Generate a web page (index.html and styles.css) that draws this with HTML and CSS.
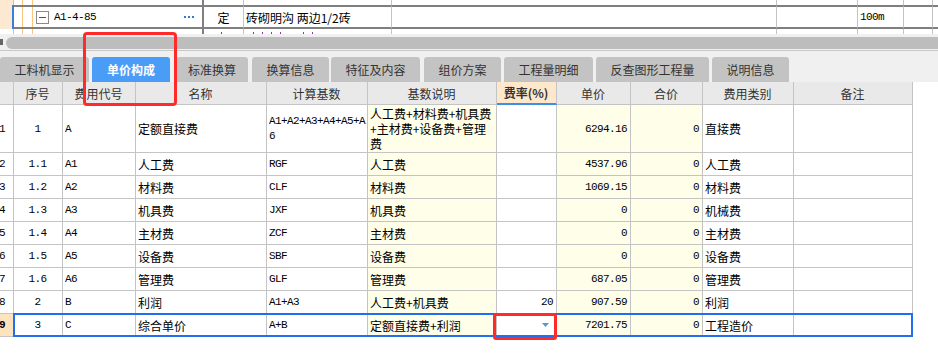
FILE: index.html
```html
<!DOCTYPE html>
<html lang="zh-CN">
<head>
    <meta charset="UTF-8">
    <title>单价构成</title>
    <link rel="stylesheet" href="styles.css">
</head>
<body>
<div class="page">

    <!-- Upper grid: the selected item row, partly scrolled -->
    <div class="top-grid">
        <div class="trow trow-prev">
            <div class="c-ind"></div><div class="c-code"></div><div></div><div></div><div></div><div></div><div></div><div></div><div class="c-last"></div>
        </div>
        <div class="trow trow-main">
            <div class="c-ind"></div>
            <div class="c-code">
                <span class="fold"></span>
                <span class="mono code-text">A1-4-85</span>
                <span class="more"><i></i><i></i><i></i></span>
            </div>
            <div class="c-type">定</div>
            <div class="c-name">砖砌明沟 两边1/2砖</div>
            <div></div>
            <div></div>
            <div class="c-unit mono">100m</div>
            <div></div>
            <div class="c-last"></div>
        </div>
        <div class="trow trow-next">
            <div class="c-ind"></div>
            <div class="c-code"></div>
            <div class="dots dots-type"><i></i></div>
            <div class="dots dots-name"><i></i><i></i><i></i><i></i><i class="far"></i><i></i></div>
            <div></div><div></div><div></div><div></div><div class="c-last"></div>
        </div>
    </div>

    <!-- Horizontal scrollbar -->
    <div class="hscroll">
        <span class="hscroll-arrow"></span>
        <span class="hscroll-thumb"></span>
    </div>

    <!-- Tabs -->
    <div class="tabbar">
        <div class="tab">工料机显示</div>
        <div class="tab active">单价构成</div>
        <div class="tab">标准换算</div>
        <div class="tab">换算信息</div>
        <div class="tab">特征及内容</div>
        <div class="tab">组价方案</div>
        <div class="tab">工程量明细</div>
        <div class="tab">反查图形工程量</div>
        <div class="tab">说明信息</div>
    </div>

    <!-- Unit price breakdown grid -->
    <div class="grid">
        <div class="grow ghead">
            <div></div>
            <div>序号</div>
            <div>费用代号</div>
            <div>名称</div>
            <div>计算基数</div>
            <div>基数说明</div>
            <div class="h-rate">费率(%)</div>
            <div>单价</div>
            <div>合价</div>
            <div>费用类别</div>
            <div>备注</div>
        </div>

        <div class="grow tall">
            <div class="rn mono">1</div>
            <div class="mono center">1</div>
            <div class="mono">A</div>
            <div>定额直接费</div>
            <div class="mono wrap">A1+A2+A3+A4+A5+A6</div>
            <div class="yellow wrap">人工费+材料费+机具费+主材费+设备费+管理费</div>
            <div class="mono right"></div>
            <div class="yellow mono right">6294.16</div>
            <div class="yellow mono right">0</div>
            <div>直接费</div>
            <div></div>
        </div>

        <div class="grow">
            <div class="rn mono">2</div>
            <div class="mono center">1.1</div>
            <div class="mono">A1</div>
            <div>人工费</div>
            <div class="mono">RGF</div>
            <div class="yellow">人工费</div>
            <div class="mono right"></div>
            <div class="yellow mono right">4537.96</div>
            <div class="yellow mono right">0</div>
            <div>人工费</div>
            <div></div>
        </div>

        <div class="grow">
            <div class="rn mono">3</div>
            <div class="mono center">1.2</div>
            <div class="mono">A2</div>
            <div>材料费</div>
            <div class="mono">CLF</div>
            <div class="yellow">材料费</div>
            <div class="mono right"></div>
            <div class="yellow mono right">1069.15</div>
            <div class="yellow mono right">0</div>
            <div>材料费</div>
            <div></div>
        </div>

        <div class="grow">
            <div class="rn mono">4</div>
            <div class="mono center">1.3</div>
            <div class="mono">A3</div>
            <div>机具费</div>
            <div class="mono">JXF</div>
            <div class="yellow">机具费</div>
            <div class="mono right"></div>
            <div class="yellow mono right">0</div>
            <div class="yellow mono right">0</div>
            <div>机械费</div>
            <div></div>
        </div>

        <div class="grow">
            <div class="rn mono">5</div>
            <div class="mono center">1.4</div>
            <div class="mono">A4</div>
            <div>主材费</div>
            <div class="mono">ZCF</div>
            <div class="yellow">主材费</div>
            <div class="mono right"></div>
            <div class="yellow mono right">0</div>
            <div class="yellow mono right">0</div>
            <div>主材费</div>
            <div></div>
        </div>

        <div class="grow">
            <div class="rn mono">6</div>
            <div class="mono center">1.5</div>
            <div class="mono">A5</div>
            <div>设备费</div>
            <div class="mono">SBF</div>
            <div class="yellow">设备费</div>
            <div class="mono right"></div>
            <div class="yellow mono right">0</div>
            <div class="yellow mono right">0</div>
            <div>设备费</div>
            <div></div>
        </div>

        <div class="grow">
            <div class="rn mono">7</div>
            <div class="mono center">1.6</div>
            <div class="mono">A6</div>
            <div>管理费</div>
            <div class="mono">GLF</div>
            <div class="yellow">管理费</div>
            <div class="mono right"></div>
            <div class="yellow mono right">687.05</div>
            <div class="yellow mono right">0</div>
            <div>管理费</div>
            <div></div>
        </div>

        <div class="grow">
            <div class="rn mono">8</div>
            <div class="mono center">2</div>
            <div class="mono">B</div>
            <div>利润</div>
            <div class="mono">A1+A3</div>
            <div class="yellow">人工费+机具费</div>
            <div class="mono right">20</div>
            <div class="yellow mono right">907.59</div>
            <div class="yellow mono right">0</div>
            <div>利润</div>
            <div></div>
        </div>

        <div class="grow selected">
            <div class="rn mono rn-current">9</div>
            <div class="mono center">3</div>
            <div class="mono">C</div>
            <div>综合单价</div>
            <div class="mono">A+B</div>
            <div class="yellow">定额直接费+利润</div>
            <div class="right">
                <svg class="drop" width="7" height="4" viewBox="0 0 7 4"><polygon points="0,0 7,0 3.5,4" fill="#5f93d6"/></svg>
            </div>
            <div class="yellow mono right">7201.75</div>
            <div class="yellow mono right">0</div>
            <div>工程造价</div>
            <div></div>
        </div>
    </div>

    <!-- Red annotation boxes -->
    <div class="mark mark-tab"></div>
    <div class="mark mark-rate"></div>
</div>
</body>
</html>
```

FILE: styles.css
```css
/* Base */
*,
*::before,
*::after {
    box-sizing: border-box;
}

body {
    margin: 0;
    background: #ffffff;
    color: #000000;
    font-family: "Noto Sans CJK SC", sans-serif;
    font-size: 12px;
}

.page {
    position: relative;
    width: 938px;
    height: 355px;
    overflow: hidden;
}

.mono {
    font-family: "Liberation Mono", "Noto Sans CJK SC", monospace;
    font-size: 11px;
    letter-spacing: -0.6px;
}

/* Upper grid */
.trow {
    display: grid;
    grid-template-columns: 14px 190px 40px 148px 385px 81px 46px 29px 1fr;
}

.trow > div {
    border-right: 1px solid #c4c4c4;
    overflow: hidden;
    white-space: nowrap;
}

.trow .c-last {
    border-right: none;
}

.trow .c-ind {
    background: #fde9d2;
    border-right: 1px solid #c4c4c4;
}

.trow .c-code {
    border-right: 2px solid #7f7f7f;
    background:
        linear-gradient(#f9c77a, #f9c77a) 8px 0 / 1px 100% no-repeat,
        linear-gradient(#f9c77a, #f9c77a) 18px 0 / 1px 100% no-repeat;
}

.trow-prev {
    height: 5px;
}

.trow-main {
    height: 24px;
}

.trow-main > div {
    border-top: 2px solid #7f7f7f;
    border-bottom: 2px solid #7f7f7f;
    display: flex;
    align-items: center;
}

.trow-main .c-ind {
    border-top: none;
    border-bottom: none;
    border-right: 2px solid #3a7de0;
}

.trow-next {
    height: 5px;
}

.trow-next .c-ind {
    background: #ffffff;
}

.fold {
    width: 13px;
    height: 13px;
    margin-left: 22px;
    border: 1px solid #8a8a8a;
    background: #ffffff linear-gradient(#555, #555) center / 7px 1px no-repeat;
}

.code-text {
    margin-left: 5px;
}

.more {
    margin-left: auto;
    margin-right: 8px;
    display: flex;
    gap: 2px;
}

.more i {
    width: 2px;
    height: 2px;
    background: #2f7bd3;
}

.c-type {
    justify-content: center;
}

.c-name {
    padding-left: 2px;
}

.c-unit {
    padding-left: 2px;
}

.dots {
    display: flex;
    align-items: flex-start;
    padding-top: 3px;
}

.dots i {
    width: 1px;
    height: 2px;
    background: #8a3a9a;
    margin-left: 8px;
}

.dots-type i {
    margin-left: 17px;
}

.dots-name i:first-child {
    margin-left: 9px;
}

.dots-name i.far {
    margin-left: 22px;
}

/* Scrollbar */
.hscroll {
    height: 17px;
    background: #f0f0f0;
    border-bottom: 1px solid #c8c8c8;
    display: flex;
    align-items: flex-start;
    padding-top: 3px;
}

.hscroll-arrow {
    width: 3px;
    height: 6px;
    margin-top: 2px;
    background: #666666;
}

.hscroll-thumb {
    flex: 1;
    height: 12px;
    margin-left: 3px;
    background: #bdbdbd;
    border-radius: 6px 0 0 6px;
}

/* Tabs */
.tabbar {
    height: 31px;
    padding-top: 6px;
    background: #f0f0f0;
    display: flex;
}

.tab {
    height: 25px;
    margin-left: 3px;
    background: #c3c3c3;
    border-radius: 3px 3px 0 0;
    color: #333333;
    display: flex;
    align-items: center;
    justify-content: center;
}

.tab:nth-child(1) { width: 89px; margin-left: 0; }
.tab:nth-child(2) { width: 78px; }
.tab:nth-child(3) { width: 72px; margin-left: 6px; }
.tab:nth-child(4) { width: 77px; margin-left: 4px; }
.tab:nth-child(5) { width: 89px; margin-left: 2px; }
.tab:nth-child(6) { width: 77px; margin-left: 4px; }
.tab:nth-child(7) { width: 89px; }
.tab:nth-child(8) { width: 113px; }
.tab:nth-child(9) { width: 77px; }

.tab.active {
    background: #4a9df6;
    color: #ffffff;
    font-weight: bold;
}

/* Unit price grid */
.grow {
    position: relative;
    display: grid;
    grid-template-columns: 14px 49px 73px 131px 101px 129px 60px 74px 72px 91px 119px;
    height: 23px;
}

.grow > div {
    border-right: 1px solid #c4c4c4;
    border-bottom: 1px solid #c4c4c4;
    padding: 0 3px 0 2px;
    display: flex;
    align-items: center;
    overflow: hidden;
    white-space: nowrap;
}

.grow.tall {
    height: 48px;
}

.ghead > div {
    background: #e9e9e9;
    color: #333333;
    justify-content: center;
}

.ghead .h-rate {
    background: #fde8cc;
    border-bottom: 2px solid #3d8ee8;
    font-weight: bold;
}

.grow .yellow {
    background: #fffee9;
}

.grow .center {
    justify-content: center;
}

.grow .right {
    justify-content: flex-end;
}

.grow .wrap {
    padding-right: 0;
    white-space: normal;
    word-break: break-all;
    line-height: 15px;
}

.grow .rn {
    padding: 0;
    text-indent: -1px;
}

.grow .rn-current {
    background: #fde3be;
    font-weight: bold;
}

.drop {
    margin-right: 4px;
}

.grow.selected::after {
    content: "";
    position: absolute;
    left: 13px;
    top: -1px;
    width: 900px;
    height: 24px;
    border: 2px solid #1f6ff0;
    pointer-events: none;
}

/* Annotation boxes */
.mark {
    position: absolute;
    border: 3px solid #ff2b2b;
    border-radius: 4px;
    pointer-events: none;
}

.mark-tab {
    left: 83px;
    top: 32px;
    width: 94px;
    height: 74px;
}

.mark-rate {
    left: 493px;
    top: 313px;
    width: 64px;
    height: 27px;
    border-radius: 3px;
}
```
